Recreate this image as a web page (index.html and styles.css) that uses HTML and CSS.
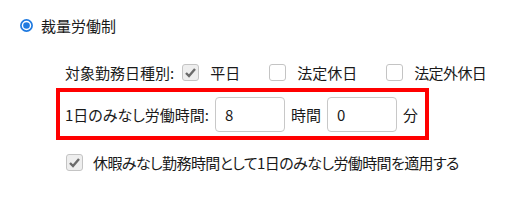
FILE: index.html
```html
<!DOCTYPE html>
<html lang="ja">
<head>
<meta charset="utf-8">
<link rel="stylesheet" href="styles.css">
</head>
<body>
<div class="page">
  <div class="radio-row">
    <svg class="radio" width="13" height="13" viewBox="0 0 13 13"><circle cx="6.5" cy="6.5" r="5.6" fill="#fff" stroke="#1f7ae0" stroke-width="1.7"/><circle cx="6.5" cy="6.5" r="3.3" fill="#1f7ae0"/></svg>
    <span class="label">裁量労働制</span>
  </div>
  <div class="sub">
    <div class="options">
      <span class="opt-label">対象勤務日種別:</span>
      <span class="cb checked"><svg width="13" height="11" viewBox="0 0 13 11"><path d="M2 6 L5 9 L11 2" fill="none" stroke="#6b6b6b" stroke-width="2.4"/></svg></span>
      <span class="cb-text">平日</span>
      <span class="cb"></span>
      <span class="cb-text">法定休日</span>
      <span class="cb"></span>
      <span class="cb-text">法定外休日</span>
    </div>
    <div class="redbox">
      <span class="field-label">1日のみなし労働時間:</span>
      <input class="num" type="text" value="8">
      <span class="unit">時間</span>
      <input class="num" type="text" value="0">
      <span class="unit">分</span>
    </div>
    <div class="apply">
      <span class="cb checked"><svg width="13" height="11" viewBox="0 0 13 11"><path d="M2 6 L5 9 L11 2" fill="none" stroke="#6b6b6b" stroke-width="2.4"/></svg></span>
      <span class="apply-text">休暇みなし勤務時間として1日のみなし労働時間を適用する</span>
    </div>
  </div>
</div>
</body>
</html>
```

FILE: styles.css
```css
html, body {
  margin: 0;
  padding: 0;
  background: #fff;
}
body {
  font-family: "Noto Sans CJK JP", "Noto Sans", sans-serif;
  font-size: 15px;
  color: #1a1a1a;
}
.page {
  padding-top: 15px;
}
.radio-row {
  display: flex;
  align-items: center;
  height: 20px;
  padding-left: 20px;
  gap: 8px;
}
.radio {
  display: block;
}
.sub {
  padding-left: 56px;
}
.options {
  display: flex;
  align-items: center;
  height: 20px;
  margin-top: 27px;
  padding-left: 9px;
}
.opt-label {
  margin-right: 8px;
}
.cb {
  box-sizing: border-box;
  width: 17px;
  height: 17px;
  border: 1px solid #c4c4c4;
  border-radius: 3px;
  background: #fff;
  display: inline-flex;
  align-items: center;
  justify-content: center;
  flex: none;
}
.cb.checked {
  background: #eeeeee;
}
.cb-text {
  margin-left: 11px;
  margin-right: 29px;
}
.cb-text:last-child {
  margin-right: 0;
  letter-spacing: -0.6px;
}
.redbox {
  display: inline-flex;
  align-items: center;
  margin-top: 6px;
  border: 4px solid #ff0000;
  padding: 5px 7px 4px 5px;
  gap: 6px;
}
.field-label {
  font-feature-settings: "palt";
}
.num {
  box-sizing: border-box;
  width: 70px;
  height: 35px;
  border: 1px solid #c8c8c8;
  border-radius: 4px;
  padding: 0 0 0 9px;
  font-family: "Noto Sans CJK JP", "Noto Sans", sans-serif;
  font-size: 15px;
  color: #1a1a1a;
  outline: none;
}
.apply {
  display: flex;
  align-items: center;
  height: 20px;
  margin-top: 12px;
  padding-left: 10px;
}
.apply-text {
  margin-left: 10px;
  font-feature-settings: "palt";
  letter-spacing: -0.6px;
}
```
